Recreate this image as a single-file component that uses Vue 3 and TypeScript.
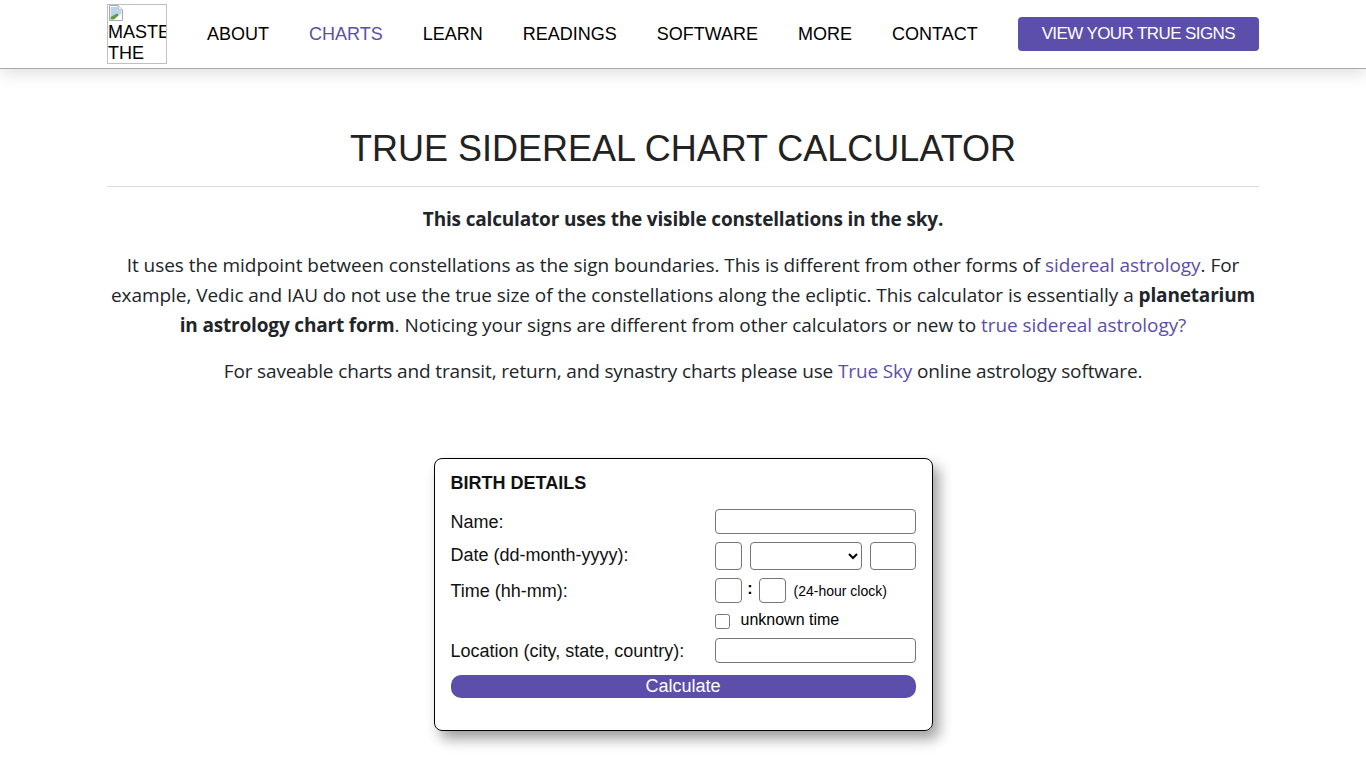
<script setup lang="ts">
const links = ['ABOUT', 'CHARTS', 'LEARN', 'READINGS', 'SOFTWARE', 'MORE', 'CONTACT']
</script>

<template>
  <div class="page">
    <header class="nav">
      <div class="nav-inner">
        <div class="logo">
          <svg class="broken" width="16" height="16" viewBox="0 0 16 16">
            <path d="M1.5 .5H10L14.5 5V15.5H1.5Z" fill="#fff" stroke="#a9a9a9" />
            <path d="M10 .5V5H14.5" fill="#eee" stroke="#a9a9a9" />
            <path d="M2.5 2H9.5V6H13.5V9L2.5 12Z" fill="#bcd3ee" />
            <path d="M2.5 14.5V12L9 8.5L11 10L6 14.5Z" fill="#5c9e3f" />
          </svg>
          <span>MASTER THE SKY</span>
        </div>
        <nav class="links">
          <a v-for="l in links" :key="l" :class="{ active: l === 'CHARTS' }">{{ l }}</a>
        </nav>
        <a class="cta">VIEW YOUR TRUE SIGNS</a>
      </div>
    </header>

    <main class="main">
      <h1>TRUE SIDEREAL CHART CALCULATOR</h1>
      <div class="intro">
        <p><strong>This calculator uses the visible constellations in the sky.</strong></p>
        <p>It uses the midpoint between constellations as the sign boundaries. This is different from other forms of <a>sidereal astrology</a>. For example, Vedic and IAU do not use the true size of the constellations along the ecliptic. This calculator is essentially a <strong>planetarium in astrology chart form</strong>. Noticing your signs are different from other calculators or new to <a>true sidereal astrology?</a></p>
        <p class="last">For saveable charts and transit, return, and synastry charts please use <a>True Sky</a> online astrology software.</p>
      </div>

      <form class="card" @submit.prevent>
        <h2>BIRTH DETAILS</h2>
        <div class="row r-name">
          <label>Name:</label>
          <div class="fields"><input class="full" type="text" /></div>
        </div>
        <div class="row r-date">
          <label>Date (dd-month-yyyy):</label>
          <div class="fields">
            <input class="day tall" type="text" />
            <select class="month tall"><option></option></select>
            <input class="year tall" type="text" />
          </div>
        </div>
        <div class="row r-time">
          <label>Time (hh-mm):</label>
          <div class="fields">
            <input class="day" type="text" />
            <span class="colon">:</span>
            <input class="day" type="text" />
            <span class="hint">(24-hour clock)</span>
          </div>
        </div>
        <div class="row r-unknown">
          <span></span>
          <div class="fields check">
            <input type="checkbox" />
            <span>unknown time</span>
          </div>
        </div>
        <div class="row r-loc">
          <label>Location (city, state, country):</label>
          <div class="fields"><input class="full" type="text" /></div>
        </div>
        <button class="calc" type="submit">Calculate</button>
      </form>
    </main>
  </div>
</template>

<style>
html, body { margin: 0; background: #fff; }
</style>

<style scoped>
.page { font-family: "Liberation Sans", Arial, sans-serif; color: #000; height: 768px; overflow: hidden; }
.nav { height: 68px; border-bottom: 1px solid #aaa; box-shadow: 0 5px 15px rgba(0,0,0,.12); background: #fff; }
.nav-inner { width: 1152px; margin: 0 auto; display: flex; align-items: center; height: 68px; }
.logo { width: 58px; height: 58px; border: 1px solid #c0c0c0; overflow: hidden; font-size: 18px; line-height: 21px; flex: none; }
.broken { display: block; margin-bottom: 1px; }
.logo span { display: block; width: 62px; }
.links { display: flex; gap: 40px; margin-left: 40px; font-size: 18px; }
.links .active { color: #5c4eab; }
.cta { margin-left: 40px; width: 241px; height: 34px; line-height: 34px; text-align: center; background: #5c4eab; color: #fff; border-radius: 4px; font-size: 17px; letter-spacing: -.6px; }
.main { width: 1152px; margin: 0 auto; }
h1 { margin: 0; padding-top: 59px; height: 58px; line-height: 42px; font-size: 36px; font-weight: 400; text-align: center; color: #222; border-bottom: 1px solid #ddd; }
.intro { margin-top: 17px; font-family: "Open Sans", sans-serif; font-size: 19px; line-height: 30px; text-align: center; color: #212529; letter-spacing: -.05px; }
.intro p { margin: 0 0 16px; }
.intro p.last { letter-spacing: -.14px; }
.intro strong { letter-spacing: -.17px; }
.intro a { color: #5c4eab; }
.card { box-sizing: border-box; width: 499px; height: 273px; margin: 72px auto 0; padding: 13px 16px 0; border: 1px solid #000; border-radius: 8px; box-shadow: 6px 8px 14px rgba(0,0,0,.38); }
h2 { margin: 0; font-size: 18px; line-height: 22px; font-weight: 700; color: #111; }
.row { display: grid; grid-template-columns: 264px 201px; font-size: 18px; line-height: 22px; }
.row label { color: #111; padding-top: 2px; }
.fields { display: flex; align-items: flex-start; }
input[type=text], select { box-sizing: border-box; margin: 0; border: 1px solid #767676; border-radius: 4px; background: #fff; height: 25px; padding: 0; }
.full { width: 201px; }
.tall { height: 28px !important; }
.day { width: 27px; }
.month { width: 112px; margin-left: 8px !important; }
.year { width: 46px; margin-left: 8px !important; }
.colon { width: 17px; text-align: center; font-size: 16px; font-weight: 700; }
.hint { margin-left: 8px; font-size: 14px; line-height: 27px; }
.r-name { margin-top: 15px; height: 33px; }
.r-date { height: 36px; }
.r-time { height: 30px; }
.r-unknown { height: 30px; }
.check { align-items: center; font-size: 16px; height: 24px; }
.check input { width: 15px; height: 15px; margin: 2px 11px 0 0; }
.check span { line-height: 20px; }
.r-loc { height: 37px; }
.calc { display: block; width: 465px; height: 23px; padding: 0; border: 0; border-radius: 10px; background: #5c4eab; color: #fff; font-family: "Liberation Sans", Arial, sans-serif; font-size: 18px; line-height: 21px; }
</style>
